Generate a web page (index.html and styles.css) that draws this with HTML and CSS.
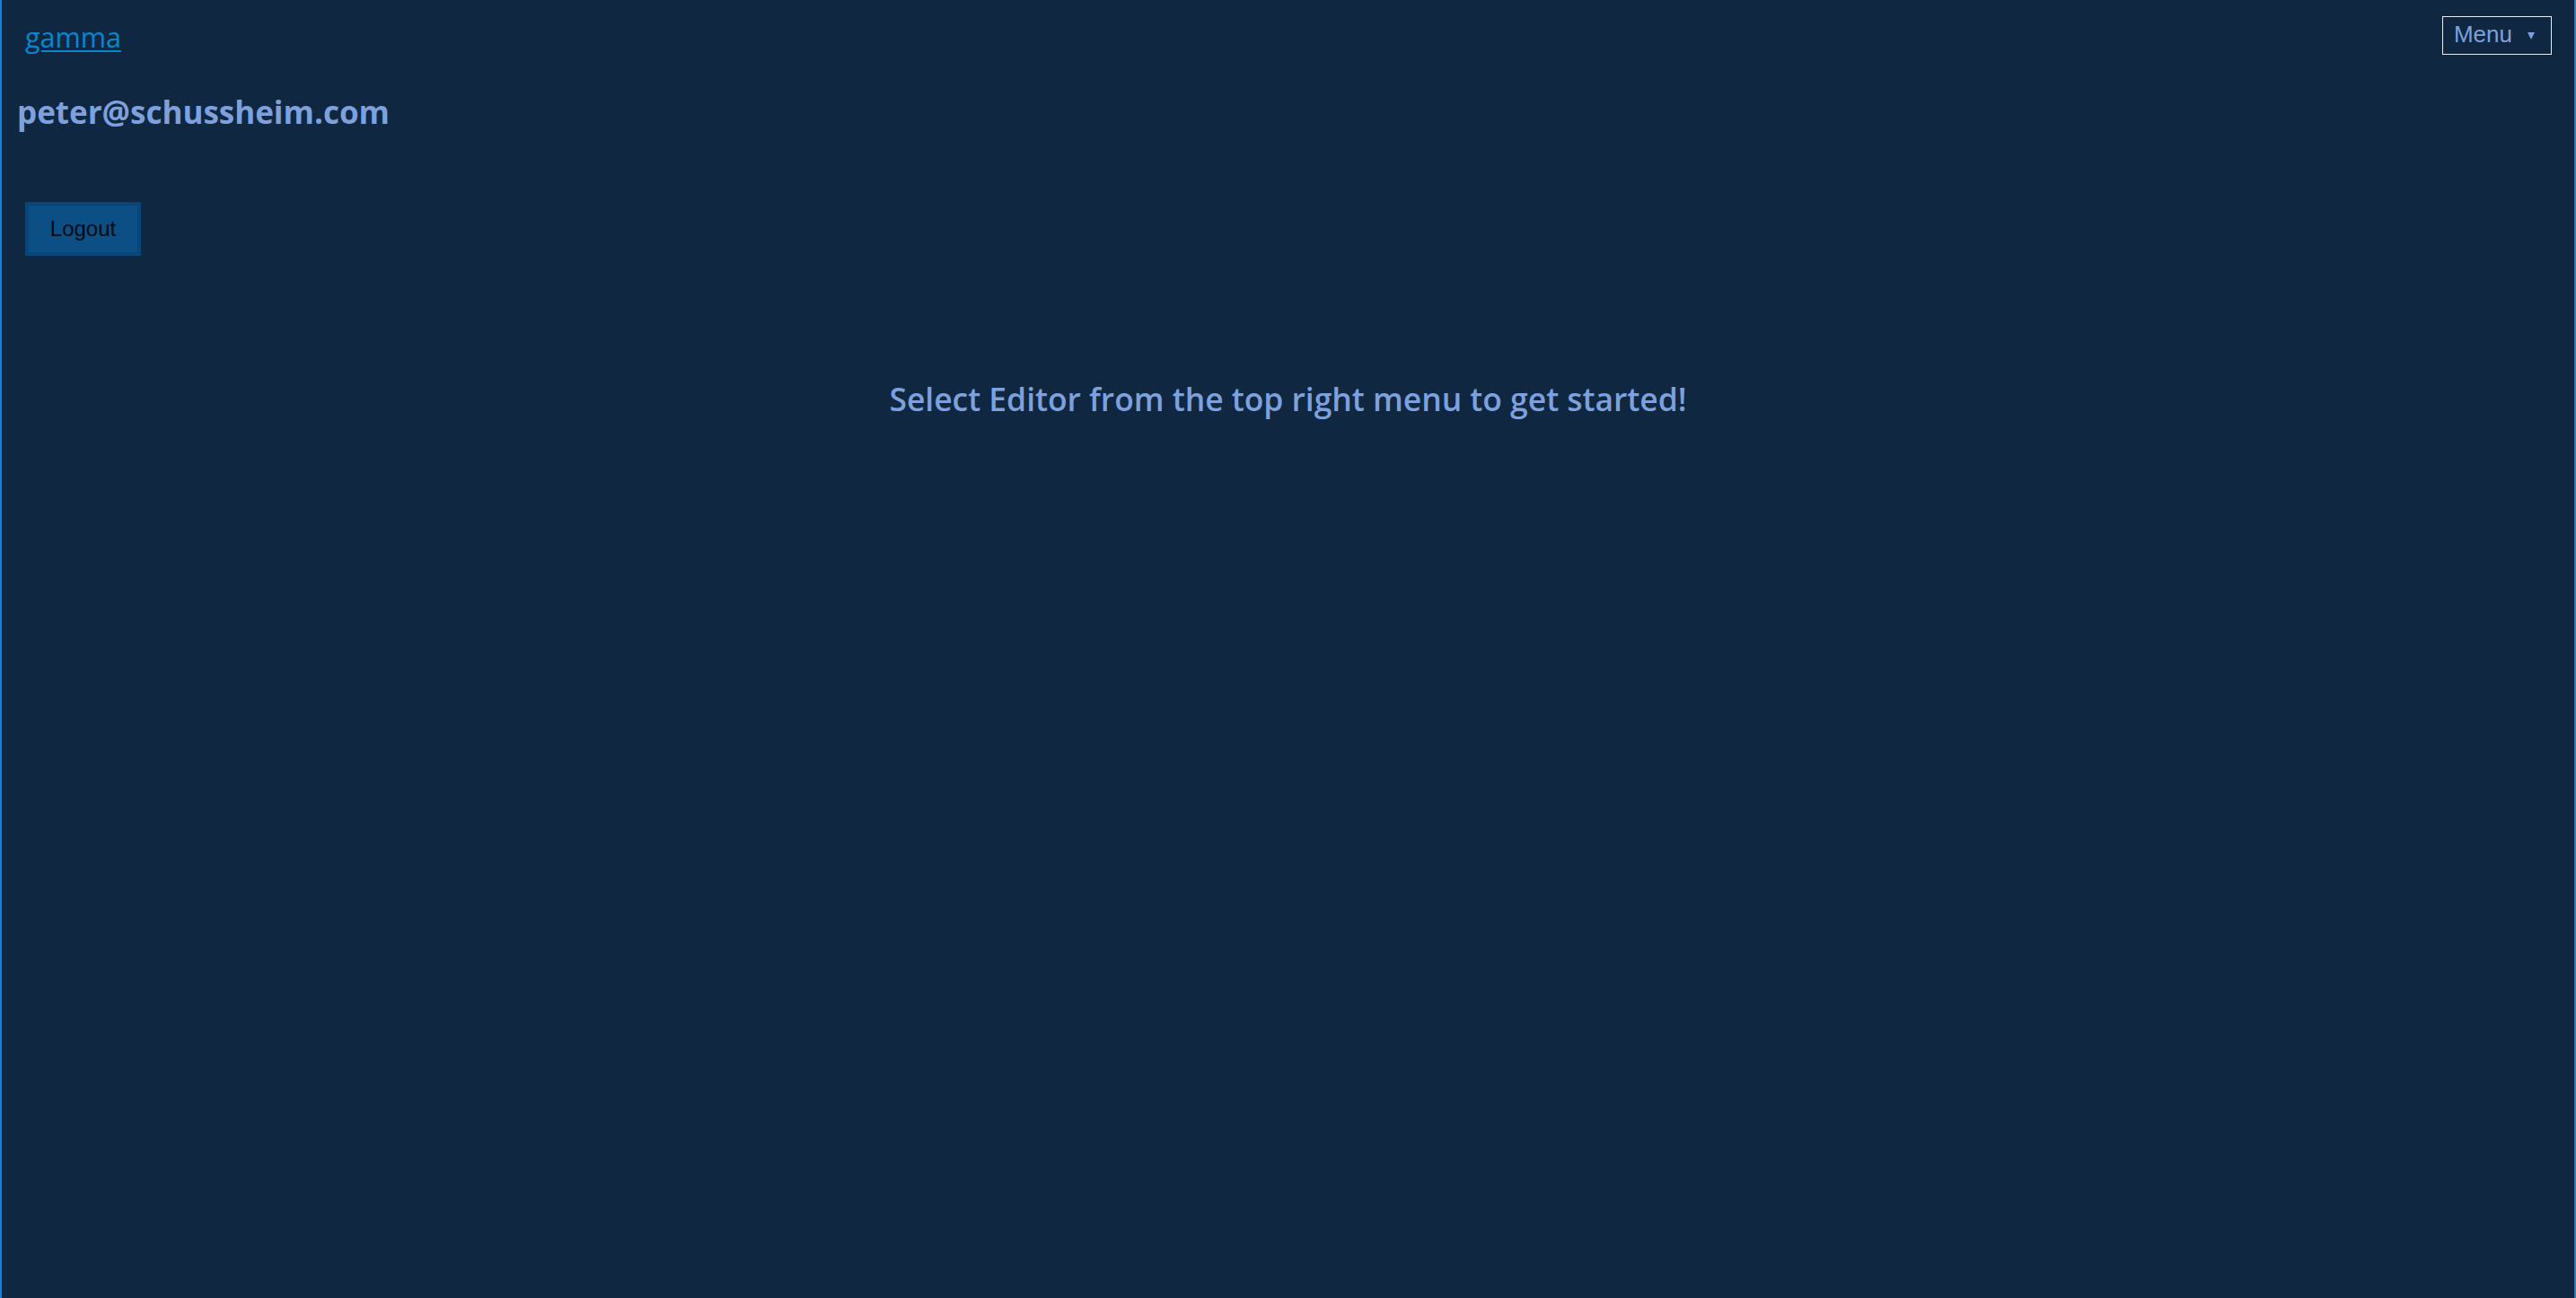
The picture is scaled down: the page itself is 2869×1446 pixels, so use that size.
FILE: index.html
```html
<!DOCTYPE html>
<html lang="en">
<head>
<meta charset="utf-8">
<title>gamma</title>
<link rel="stylesheet" href="styles.css">
</head>
<body>
<div class="page">
  <header class="topbar">
    <a class="brand" href="#">gamma</a>
    <div class="menu">Menu <span class="caret"></span></div>
  </header>
  <h2 class="user">peter@schussheim.com</h2>
  <div class="actions"><button class="logout" type="button">Logout</button></div>
  <p class="hint">Select Editor from the top right menu to get started!</p>
</div>
</body>
</html>
```
FILE: styles.css
```css
html, body {
  margin: 0;
  padding: 0;
  height: 100%;
}
body {
  background: #0f2740;
}
.page {
  box-sizing: border-box;
  min-height: 100vh;
  border-left: 2px solid #1b80d8;
  border-right: 2px solid #1b80d8;
  display: flex;
  flex-direction: column;
  font-family: "Open Sans", "Noto Sans", sans-serif;
  color: #7ea0dc;
}
.topbar {
  display: flex;
  justify-content: space-between;
  align-items: flex-start;
  padding: 18px 25px 0 26px;
}
.brand {
  margin-top: 8px;
  font-size: 30.5px;
  line-height: 1;
  color: #0a86cc;
  text-decoration: underline;
  text-underline-offset: 3px;
  text-decoration-thickness: 2px;
}
.menu {
  display: flex;
  align-items: center;
  gap: 17px;
  border: 1px solid #e6edf5;
  padding: 4px 18px 7px 12px;
  font-family: "Liberation Sans", Arial, sans-serif;
  font-size: 26px;
  line-height: 30px;
  color: #7ea0dc;
}
.caret {
  width: 0;
  height: 0;
  border-left: 4.5px solid transparent;
  border-right: 4.5px solid transparent;
  border-top: 8px solid #7ea0dc;
  margin-top: 4px;
}
.user {
  margin: 46px 0 0 17px;
  font-size: 35px;
  line-height: 1;
  font-weight: 700;
  color: #7ea0dc;
}
.actions {
  margin: 83px 0 0 26px;
}
.logout {
  box-sizing: border-box;
  width: 129px;
  height: 60px;
  background: #0b4f85;
  border: 4px solid #0a4578;
  border-radius: 0;
  font-family: "Liberation Sans", Arial, sans-serif;
  font-size: 24px;
  color: #020a12;
  padding: 0;
}
.hint {
  margin: 142px 0 0;
  text-align: center;
  font-size: 35.4px;
  line-height: 1;
  font-weight: 600;
  color: #7ea0dc;
}
```
